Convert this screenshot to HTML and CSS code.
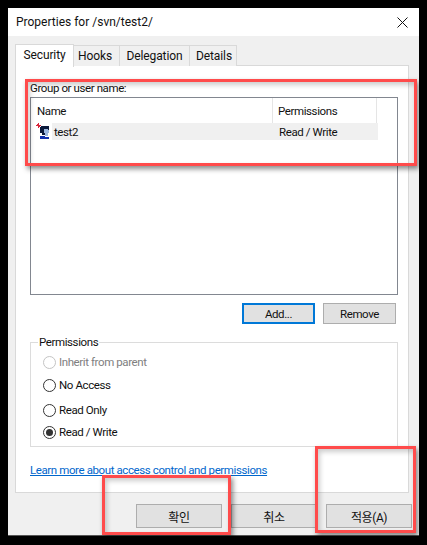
FILE: index.html
```html
<!DOCTYPE html>
<html lang="en">
    <head>
        <meta charset="UTF-8" />
        <meta name="viewport" content="width=device-width, initial-scale=1.0" />
        <title>Properties for /svn/test2/</title>

        <link rel="stylesheet" href="styles.css">
    </head>

    <body>
        <div class="window">
            <div class="titlebar">
                <span>Properties for /svn/test2/</span>
                <svg class="close" viewBox="0 0 11 11" width="11" height="11" fill="none" stroke="#111" stroke-width="1">
                    <path d="M0.5 0.5l10 10M10.5 0.5l-10 10" />
                </svg>
            </div>

            <div class="content">
                <div class="tabs">
                    <div class="tab tab-security active">Security</div>
                    <div class="tab tab-hooks">Hooks</div>
                    <div class="tab tab-delegation">Delegation</div>
                    <div class="tab tab-details">Details</div>
                </div>

                <div class="panel">
                    <div class="label">Group or user name:</div>

                    <div class="listbox">
                        <div class="list-head">
                            <div class="col-name">Name</div>
                            <div class="col-perm">Permissions</div>
                        </div>
                        <div class="list-row">
                            <svg class="user-icon" viewBox="0 0 14 17" width="14" height="17" shape-rendering="crispEdges">
                                <path d="M5 3h7l1 1v3h-1v5H6v-2H4V5z" fill="#0c1a3c" />
                                <path d="M8 6h4l1 2v1l-1 1v3H9v-2L8 9z" fill="#9db8e0" />
                                <path d="M4 13h5v1h4v2H4z" fill="#1030b0" />
                                <path d="M0 2h5v1H0zM2 0h1v5H2zM1 1h1v1H1zM3 3h1v1H3z" fill="#d8243a" />
                            </svg>
                            <div class="row-name">test2</div>
                            <div class="row-perm">Read / Write</div>
                        </div>
                    </div>

                    <div class="list-buttons">
                        <button class="btn btn-default">Add...</button>
                        <button class="btn">Remove</button>
                    </div>

                    <fieldset class="perms">
                        <legend>Permissions</legend>
                        <div class="radio radio-inherit disabled"><i></i>Inherit from parent</div>
                        <div class="radio radio-none"><i></i>No Access</div>
                        <div class="radio radio-read"><i></i>Read Only</div>
                        <div class="radio radio-write checked"><i></i>Read / Write</div>
                    </fieldset>

                    <a class="learn" href="#">Learn more about access control and permissions</a>
                </div>

                <div class="footer">
                    <button class="btn btn-footer">확인</button>
                    <button class="btn btn-footer">취소</button>
                    <button class="btn btn-footer">적용(A)</button>
                </div>
            </div>
        </div>

        <div class="mark mark-list"></div>
        <div class="mark mark-ok"></div>
        <div class="mark mark-apply"></div>
    </body>
</html>
```

FILE: styles.css
```css
* {
    margin: 0;
    padding: 0;
    box-sizing: border-box;
}

html,
body {
    height: 545px;
    overflow: hidden;
}

body {
    background-color: #000;
    padding: 8px;
    font-family: Roboto, "Noto Sans CJK KR", sans-serif;
    font-size: 11.5px;
    letter-spacing: -0.4px;
    color: #111;
}

.window {
    width: 411px;
    height: 528px;
    background-color: #f0f0f0;
    border-bottom: 1px solid #555;
    display: flex;
    flex-direction: column;
}

.titlebar {
    height: 28px;
    background-color: #fff;
    padding: 0 11px 0 8px;
    display: flex;
    align-items: center;
    justify-content: space-between;
    font-size: 12px;
    letter-spacing: 0;
}

.content {
    padding: 8px 10px 0 7px;
    flex: 1;
    display: flex;
    flex-direction: column;
}

.tabs {
    display: flex;
    align-items: flex-end;
    height: 22px;
    position: relative;
    z-index: 1;
    margin-bottom: -1px;
    font-size: 12px;
    letter-spacing: -0.1px;
}

.tab {
    height: 21px;
    line-height: 20px;
    text-align: center;
    background-color: #f0f0f0;
    border: 1px solid #d9d9d9;
    border-left: none;
    border-bottom: none;
}

.tab-security {
    width: 59px;
    height: 23px;
    line-height: 20px;
    background-color: #fff;
    border-left: 1px solid #d9d9d9;
    margin-bottom: -1px;
}

.tab-hooks {
    width: 46px;
    padding-right: 3px;
}

.tab-delegation {
    width: 70px;
}

.tab-details {
    width: 47px;
    padding-left: 2px;
}

.panel {
    width: 394px;
    height: 428px;
    background-color: #fff;
    border: 1px solid #d9d9d9;
    padding: 14px 10px 0 14px;
}

.label {
    height: 17px;
    line-height: 16px;
}

.listbox {
    width: 368px;
    height: 198px;
    border: 1px solid #828790;
}

.list-head {
    display: flex;
    height: 25px;
    line-height: 27px;
}

.col-name {
    width: 242px;
    padding-left: 6px;
    border-right: 1px solid #e5e5e5;
}

.col-perm {
    width: 104px;
    padding-left: 5px;
    border-right: 1px solid #e5e5e5;
}

.list-row {
    display: flex;
    align-items: center;
    height: 17px;
}

.user-icon {
    flex: none;
    margin: 0 2px 0 5px;
}

.row-name {
    width: 221px;
    height: 17px;
    line-height: 18px;
    background-color: #f0f0f0;
    padding-left: 2px;
}

.row-perm {
    width: 105px;
    height: 17px;
    line-height: 18px;
    background-color: #f0f0f0;
    padding-left: 6px;
}

.list-buttons {
    display: flex;
    justify-content: flex-end;
    gap: 8px;
    width: 366px;
    margin-top: 8px;
}

.btn {
    width: 73px;
    height: 21px;
    background-color: #e1e1e1;
    border: 1px solid #adadad;
    font-family: inherit;
    font-size: 11.5px;
    letter-spacing: inherit;
    color: #111;
}

.btn-default {
    border: 2px solid #0078d7;
}

.perms {
    width: 368px;
    height: 112px;
    margin-top: 11px;
    border: 1px solid #dcdcdc;
}

.perms legend {
    margin-left: 7px;
    padding: 0 1px;
    line-height: 14px;
}

.radio {
    margin-left: 12px;
    display: flex;
    align-items: center;
    gap: 3px;
    height: 16px;
    line-height: 16px;
    white-space: nowrap;
}

.radio i {
    width: 13px;
    height: 13px;
    border: 1px solid #333;
    border-radius: 50%;
    background-color: #fff;
    display: flex;
    align-items: center;
    justify-content: center;
}

.radio-inherit {
    margin-top: 5px;
}

.radio-none {
    margin-top: 7px;
}

.radio-read {
    margin-top: 9px;
}

.radio-write {
    margin-top: 6px;
}

.disabled {
    color: #808080;
}

.disabled i {
    border-color: #c4c4c4;
}

.checked i::after {
    content: "";
    width: 7px;
    height: 7px;
    border-radius: 50%;
    background-color: #333;
}

.learn {
    display: block;
    margin-top: 15px;
    line-height: 16px;
    color: #0066cc;
}

.footer {
    display: flex;
    justify-content: flex-end;
    gap: 9px;
    width: 397px;
    margin-top: 11px;
}

.btn-footer {
    width: 86px;
    height: 24px;
    font-size: 12px;
}

.mark {
    position: absolute;
    border: 3px solid #ff4b4b;
    box-shadow: 2px 3px 5px rgba(0, 0, 0, 0.45), inset 2px 3px 5px rgba(0, 0, 0, 0.2);
}

.mark-list {
    left: 25px;
    top: 79px;
    width: 392px;
    height: 87px;
}

.mark-ok {
    left: 102px;
    top: 475px;
    width: 129px;
    height: 60px;
}

.mark-apply {
    left: 315px;
    top: 446px;
    width: 101px;
    height: 87px;
}
```
